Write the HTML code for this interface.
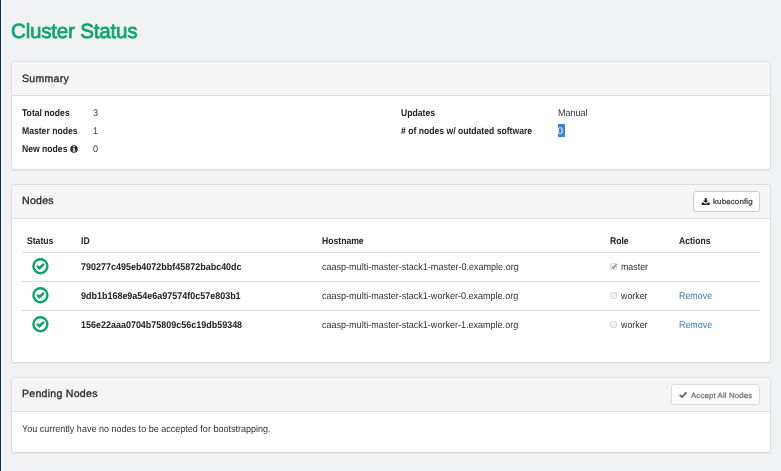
<!DOCTYPE html>
<html><head><meta charset="utf-8">
<style>
*{box-sizing:border-box;margin:0;padding:0}
html,body{width:781px;height:471px;overflow:hidden}
body{will-change:transform;text-rendering:geometricPrecision;background:#eff1f3;font-family:"Liberation Sans",sans-serif;font-size:9px;color:#333;position:relative}
.lb{position:absolute;left:0;top:0;width:1px;height:471px;background:#04295a}
.lb2{position:absolute;left:1px;top:0;width:1px;height:471px;background:#fcfdfd}
h1{position:absolute;left:11px;top:18.8px;font-size:20.6px;font-weight:normal;color:#0ea26c;line-height:26px;letter-spacing:-0.22px;-webkit-text-stroke:0.7px #0ea26c;white-space:nowrap}
.panel{position:absolute;left:11px;width:760px;background:#fff;border:1px solid #ddd;border-radius:3px;box-shadow:0 1px 1px rgba(0,0,0,.05)}
.ph{height:34px;border-radius:2px 2px 0 0;background:#f5f5f5;border-bottom:1px solid #ddd;position:relative}
.ph .t{position:absolute;left:10px;top:9.6px;font-size:10.6px;line-height:14px;color:#262626;letter-spacing:0.25px;-webkit-text-stroke:0.3px #262626}
.btn{position:absolute;background:#fff;border:1px solid #ccc;border-radius:3px;font-size:7.5px;color:#333;height:21px;white-space:nowrap}
.btn svg{position:absolute}.btn span{position:absolute;top:5px;line-height:10px;letter-spacing:0.1px;-webkit-text-stroke:0.2px currentColor;transform:scaleX(1.12);transform-origin:0 0}
.lab{position:absolute;white-space:nowrap;line-height:11px;font-size:9.75px;transform-origin:0 0;font-weight:bold;color:#222;transform:scaleX(0.883)}
.val{position:absolute;white-space:nowrap;line-height:11px;font-size:9.75px;transform-origin:0 0;color:#333;transform:scaleX(0.926)}
.th{position:absolute;white-space:nowrap;line-height:11px;font-size:9.75px;transform-origin:0 0;font-weight:bold;color:#222;transform:scaleX(0.883)}
.hr{position:absolute;left:10px;width:738px;height:1px;background:#ddd}
.id{position:absolute;white-space:nowrap;line-height:11px;font-size:9.75px;transform-origin:0 0;font-weight:bold;color:#222;left:69px;transform:scaleX(0.920)}
.hn{position:absolute;white-space:nowrap;line-height:11px;font-size:9.75px;transform-origin:0 0;color:#333;left:310px;transform:scaleX(0.926)}
.role{position:absolute;white-space:nowrap;line-height:11px;font-size:9.75px;transform-origin:0 0;color:#2c2c2c;left:608.6px;transform:scaleX(0.906)}
.cb{position:absolute;left:598px;width:7px;height:7px;border:1px solid #dadada;border-radius:1.5px;background:#f1f1f1}
.rm{position:absolute;white-space:nowrap;line-height:11px;font-size:9.75px;transform-origin:0 0;color:#3a7cb8;left:667px;transform:scaleX(0.912)}
.ic{position:absolute;left:19px;overflow:visible}
</style></head><body>
<div class="lb"></div><div class="lb2"></div>
<h1>Cluster Status</h1>

<div class="panel" style="top:61px;height:109px">
 <div class="ph"><span class="t">Summary</span></div>
 <span class="lab" style="left:10px;top:46px">Total nodes</span><span class="val" style="left:81px;top:46px">3</span>
 <span class="lab" style="left:10px;top:64px">Master nodes</span><span class="val" style="left:81px;top:64px">1</span>
 <span class="lab" style="left:10px;top:82px">New nodes</span><span class="val" style="left:81px;top:82px">0</span>
 <svg style="position:absolute;left:58px;top:83px" width="8" height="8" viewBox="0 0 8 8"><circle cx="4" cy="4" r="3.8" fill="#2a2a2a"/><rect x="3.2" y="1.1" width="1.6" height="1.3" fill="#fff"/><rect x="3.3" y="3.3" width="1.5" height="3" fill="#fff"/><rect x="2.7" y="3.3" width="1" height="0.8" fill="#fff"/><rect x="2.7" y="5.6" width="2.7" height="0.9" fill="#fff"/></svg>
 <span class="lab" style="left:389px;top:46px">Updates</span><span class="val" style="left:546px;top:46px">Manual</span>
 <span class="lab" style="left:389px;top:64px"># of nodes w/ outdated software</span>
 <span class="val" style="left:546px;top:62px;background:#3e82d6;color:#fff;width:7px;height:13px;font-size:9.8px;line-height:16.4px;text-indent:-0.6px;transform:none;overflow:hidden">0</span>
</div>

<div class="panel" style="top:184px;height:179px">
 <div class="ph"><span class="t" style="top:8.6px">Nodes</span>
  <div class="btn" style="right:10px;top:6px;width:67px"><svg style="left:8px;top:6px;overflow:visible" width="8" height="7" viewBox="0 0 8 7"><g transform="translate(-0.3,-0.1)"><path d="M3 0h2v2.6h1.7L4 5.2 1.3 2.6H3z" fill="#222"/><path d="M0 4.6h1.9l1.3 1.2h1.6l1.3-1.2H8V7H0z" fill="#222"/></g></svg><span style="left:18.5px;transform:scaleX(1.065)">kubeconfig</span></div>
 </div>
 <span class="th" style="left:15px;top:51px">Status</span>
 <span class="th" style="left:69px;top:51px">ID</span>
 <span class="th" style="left:310px;top:51px">Hostname</span>
 <span class="th" style="left:598px;top:51px">Role</span>
 <span class="th" style="left:667px;top:51px">Actions</span>
 <div class="hr" style="top:67px"></div>
 <div class="hr" style="top:96px"></div>
 <div class="hr" style="top:125px"></div>

 <svg class="ic" style="top:72px" width="18" height="18" viewBox="0 0 18 18"><g transform="translate(0.4,0.2)"><circle cx="9" cy="9" r="7" fill="none" stroke="#0ea26c" stroke-width="2.4"/><path d="M5.7 8.6l2.4 2.4 4.3-4.3" fill="none" stroke="#0ea26c" stroke-width="2.6"/></g></svg>
 <span class="id" style="top:77px">790277c495eb4072bbf45872babc40dc</span>
 <span class="hn" style="top:77px">caasp-multi-master-stack1-master-0.example.org</span>
 <div class="cb" style="top:78px"><svg width="7" height="7" viewBox="0 0 7 7" style="display:block;position:absolute;left:-0.5px;top:-1.5px;overflow:visible"><path d="M0.9 3.7l1.5 1.5 3.2-4.2" fill="none" stroke="#8c8c8c" stroke-width="1.3"/></svg></div><span class="role" style="top:77px">master</span>

 <svg class="ic" style="top:101px" width="18" height="18" viewBox="0 0 18 18"><g transform="translate(0.4,0.2)"><circle cx="9" cy="9" r="7" fill="none" stroke="#0ea26c" stroke-width="2.4"/><path d="M5.7 8.6l2.4 2.4 4.3-4.3" fill="none" stroke="#0ea26c" stroke-width="2.6"/></g></svg>
 <span class="id" style="top:106px">9db1b168e9a54e6a97574f0c57e803b1</span>
 <span class="hn" style="top:106px">caasp-multi-master-stack1-worker-0.example.org</span>
 <div class="cb" style="top:107px"></div><span class="role" style="top:106px">worker</span>
 <span class="rm" style="top:106px">Remove</span>

 <svg class="ic" style="top:130px" width="18" height="18" viewBox="0 0 18 18"><g transform="translate(0.4,0.2)"><circle cx="9" cy="9" r="7" fill="none" stroke="#0ea26c" stroke-width="2.4"/><path d="M5.7 8.6l2.4 2.4 4.3-4.3" fill="none" stroke="#0ea26c" stroke-width="2.6"/></g></svg>
 <span class="id" style="top:135px">156e22aaa0704b75809c56c19db59348</span>
 <span class="hn" style="top:135px">caasp-multi-master-stack1-worker-1.example.org</span>
 <div class="cb" style="top:136px"></div><span class="role" style="top:135px">worker</span>
 <span class="rm" style="top:135px">Remove</span>
</div>

<div class="panel" style="top:377px;height:76px">
 <div class="ph"><span class="t" style="top:8.5px">Pending Nodes</span>
  <div class="btn" style="right:10px;top:6px;width:89px;color:#6a6a6a;border-color:#dcdcdc;background:#fdfdfd"><svg style="left:7px;top:6px;overflow:visible" width="9" height="7" viewBox="0 0 9 7"><path transform="translate(-0.2,0.3)" d="M1 3.5l2.2 2.2 4.4-4.7" fill="none" stroke="#5c5c5c" stroke-width="1.7"/></svg><span style="left:18.6px;top:5.8px;transform:scaleX(1.05)">Accept All Nodes</span></div>
 </div>
 <span class="val" style="left:10px;top:46px">You currently have no nodes to be accepted for bootstrapping.</span>
</div>
</body></html>
